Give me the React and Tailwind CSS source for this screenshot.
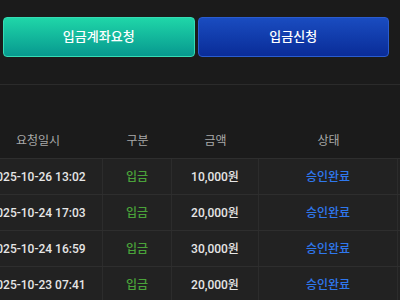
import React from 'react'

const rows = [
  { date: '2025-10-26 13:02', type: '입금', amount: '10,000원', status: '승인완료' },
  { date: '2025-10-24 17:03', type: '입금', amount: '20,000원', status: '승인완료' },
  { date: '2025-10-24 16:59', type: '입금', amount: '30,000원', status: '승인완료' },
  { date: '2025-10-23 07:41', type: '입금', amount: '20,000원', status: '승인완료' },
]

function App() {
  return (
    <div className="w-[400px] h-[300px] overflow-hidden bg-[#1b1b1b] font-['Roboto','Noto_Sans_CJK_KR',sans-serif]">
      {/* buttons */}
      <div className="flex gap-[3px] pl-[3px] pr-[11px] pt-[17px] pb-[27px] border-b border-[#2b2b2b]">
        <button className="flex-1 h-[40px] rounded-[4px] border border-[#35dcb4] bg-gradient-to-b from-[#1fd6a8] to-[#07998f] text-white text-[13px] font-medium">
          입금계좌요청
        </button>
        <button className="flex-1 h-[40px] rounded-[4px] border border-[#2a5ccf] bg-gradient-to-b from-[#1a4cc0] to-[#0a2c98] text-white text-[13px] font-medium">
          입금신청
        </button>
      </div>

      {/* table */}
      <div className="mt-[38px] ml-[-27px] w-[430px]">
        <div className="flex h-[35px] items-center text-[12px] text-[#a9a9a9]">
          <div className="w-[130px] text-center">요청일시</div>
          <div className="w-[69px] text-center">구분</div>
          <div className="w-[87px] text-center">금액</div>
          <div className="w-[139px] text-center">상태</div>
        </div>
        {rows.map((row, i) => (
          <div key={i} className="flex h-[36px] items-center bg-[#222222] border-t border-[#2e2e2e] text-[12px] font-medium">
            <div className="w-[130px] h-full flex items-center justify-center text-[#e6e6e6] border-r border-[#2c2c2c]">{row.date}</div>
            <div className="w-[69px] h-full flex items-center justify-center text-[#4aa23a] border-r border-[#2c2c2c]">{row.type}</div>
            <div className="w-[87px] h-full flex items-center justify-center text-[#e6e6e6] border-r border-[#2c2c2c]">{row.amount}</div>
            <div className="w-[139px] h-full flex items-center justify-center text-[#2f78ee] border-r border-[#2c2c2c]">{row.status}</div>
          </div>
        ))}
      </div>
    </div>
  )
}

export default App
